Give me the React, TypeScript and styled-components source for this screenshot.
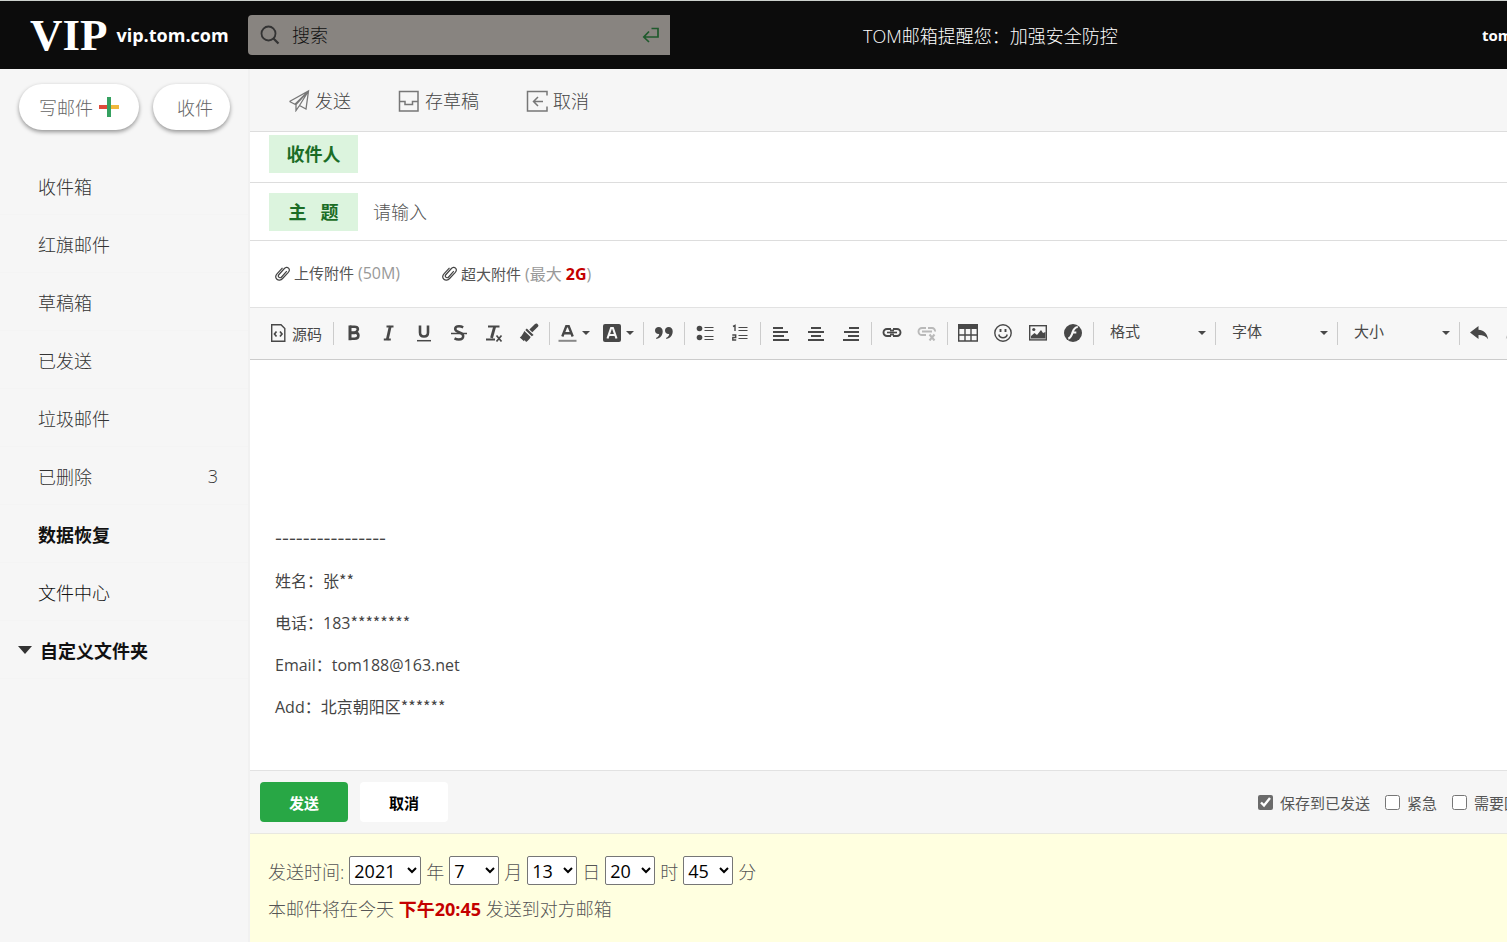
import React from "react";
import styled, { createGlobalStyle, css } from "styled-components";

const sans = `"Open Sans", "Noto Sans CJK SC", sans-serif`;

const GlobalStyle = createGlobalStyle`
  *, *::before, *::after { box-sizing: border-box; }
  body { margin: 0; font-family: ${sans}; font-size: 18px; color: #555; background: #f6f6f6; overflow-x: hidden; }
  button, input, select, textarea { font: inherit; color: inherit; }
  button { cursor: pointer; }
`;

const Page = styled.div`
  display: flex;
  flex-direction: column;
  min-height: 100vh;
`;

const Header = styled.header`
  display: flex;
  align-items: center;
  height: 69px;
  border-top: 1px solid #ccd1cd;
  background: #0c0c0c;
  color: #fff;
  white-space: nowrap;
  overflow: hidden;
`;

const Brand = styled.a`
  display: flex;
  align-items: center;
  gap: 9px;
  flex: 0 0 248px;
  padding-left: 30px;
  color: #fff;
  text-decoration: none;
`;

const BrandMark = styled.span`
  font: bold 45px/60px "Liberation Serif", serif;
`;

const BrandHost = styled.span`
  font-size: 18px;
  font-weight: 700;
`;

const Search = styled.form`
  display: flex;
  align-items: center;
  gap: 12px;
  flex: 0 0 422px;
  height: 40px;
  padding: 0 10px 0 12px;
  border-radius: 4px 0 0 4px;
  background: #888480;
  color: #333;
`;

const SearchInput = styled.input`
  flex: 1;
  min-width: 0;
  padding: 0;
  border: 0;
  outline: 0;
  background: none;
  font-weight: 300;
  &::placeholder { color: #111; opacity: 1; }
`;

const IconButton = styled.button`
  display: flex;
  padding: 0;
  border: 0;
  background: none;
`;

const Notice = styled.span`
  flex: 1;
  padding-left: 193px;
  font-weight: 300;
`;

const Account = styled.span`
  flex: 0 0 25px;
  overflow: hidden;
  font-size: 15px;
  font-weight: 700;
`;

const Body = styled.div`
  display: flex;
  flex: 1;
`;

const Sidebar = styled.aside`
  flex: 0 0 248px;
  padding-top: 15px;
`;

const PillRow = styled.div`
  display: flex;
  gap: 14px;
  padding: 0 18px 0 19px;
  margin-bottom: 27px;
`;

const Pill = styled.button<{ $wide?: boolean }>`
  display: flex;
  align-items: center;
  gap: 6px;
  width: ${(p) => (p.$wide ? 120 : 77)}px;
  height: 46px;
  padding: 0 0 0 ${(p) => (p.$wide ? 20 : 24)}px;
  border: 0;
  border-radius: 23px;
  background: #fff;
  box-shadow: 0 2px 4px rgba(0, 0, 0, 0.4);
  color: #666;
  font-weight: 300;
  white-space: nowrap;
`;

const FolderList = styled.nav`
  display: flex;
  flex-direction: column;
`;

const Folder = styled.a<{ $tone?: "bold" | "dark" | "group" }>`
  display: flex;
  align-items: center;
  gap: 8px;
  height: 58px;
  padding: 0 30px 0 ${(p) => (p.$tone === "group" ? 18 : 38)}px;
  border-bottom: 1px solid #f4f4f4;
  color: ${(p) => (p.$tone ? "#111" : "#333")};
  font-weight: ${(p) => (p.$tone === "bold" || p.$tone === "group" ? 700 : 300)};
  text-decoration: none;
`;

const Count = styled.span`
  margin-left: auto;
`;

const Main = styled.main`
  display: flex;
  flex: 1;
  flex-direction: column;
  min-width: 0;
  border-left: 2px solid #f1f1f1;
  background: #fff;
`;

const ActionBar = styled.div`
  display: flex;
  align-items: center;
  gap: 47px;
  height: 63px;
  padding: 0 38px;
  border-bottom: 1px solid #ddd;
  background: #f6f6f6;
`;

const Action = styled.button`
  display: flex;
  align-items: center;
  gap: 5px;
  padding: 0;
  border: 0;
  background: none;
  color: #444;
  font-weight: 300;
`;

const Field = styled.div<{ $tall?: boolean }>`
  display: flex;
  align-items: ${(p) => (p.$tall ? "center" : "flex-start")};
  gap: 15px;
  height: ${(p) => (p.$tall ? 58 : 51)}px;
  padding: ${(p) => (p.$tall ? 0 : 3)}px 19px 0;
  border-bottom: 1px solid #ddd;
`;

const FieldLabel = styled.label`
  flex: 0 0 89px;
  height: 38px;
  background: #dcf4de;
  color: #1b6d26;
  font-weight: 700;
  line-height: 38px;
  text-align: center;
  white-space: pre;
`;

const FieldInput = styled.input`
  flex: 1;
  min-width: 0;
  height: 38px;
  padding: 0;
  border: 0;
  outline: 0;
  font-weight: 300;
  &::placeholder { color: #555; opacity: 1; }
`;

const Attachments = styled.div`
  display: flex;
  align-items: center;
  gap: 42px;
  height: 67px;
  padding: 0 25px 2px;
  border-bottom: 1px solid #e2e2e2;
`;

const Attach = styled.button`
  display: flex;
  align-items: center;
  gap: 4px;
  padding: 0;
  border: 0;
  background: none;
  font-size: 15px;
`;

const Hint = styled.span`
  color: #999;
  font-size: 16px;
`;

const Red = styled.b`
  color: #c40000;
  font-weight: 700;
`;

const Toolbar = styled.div`
  display: flex;
  align-items: center;
  height: 52px;
  padding: 0 0 1px 20px;
  border-bottom: 1px solid #ccc;
  background: #f7f7f7;
  color: #484848;
  overflow: hidden;
`;

const Tool = styled.button<{ $kind?: "source" | "menu"; $off?: boolean }>`
  display: flex;
  flex: none;
  align-items: center;
  justify-content: center;
  gap: 5px;
  width: 35px;
  height: 34px;
  padding: 0;
  border: 0;
  background: none;
  font-size: 15px;
  white-space: nowrap;
  ${(p) => p.$kind === "source" && css`
    justify-content: flex-start;
    width: 60px;
  `}
  ${(p) => p.$kind === "menu" && css`
    width: 44px;
  `}
  ${(p) => p.$off && css`
    opacity: 0.35;
  `}
`;

const Divider = styled.span`
  flex: none;
  width: 1px;
  height: 23px;
  margin: 0 2px 0 3px;
  background: #ccc;
`;

const Combo = styled.label`
  position: relative;
  flex: none;
  width: 116px;
  svg { position: absolute; right: 6px; top: 14px; pointer-events: none; }
`;

const ComboSelect = styled.select`
  width: 100%;
  height: 32px;
  padding: 0 0 4px 14px;
  border: 0;
  appearance: none;
  background: none;
  font-size: 15px;
`;

const Editor = styled.article`
  flex: 1;
  min-height: 410px;
  padding: 166px 25px 20px;
  color: #444;
  font-size: 16px;
  line-height: 26px;
  outline: 0;
`;

const Line = styled.p`
  height: 26px;
  margin: 0 0 16px;
`;

const Mask = styled.span`
  font-family: "Noto Sans CJK SC", sans-serif;
  line-height: 16px;
`;

const Rule = styled(Mask)`
  font-size: 20px;
`;

const SendBar = styled.div`
  display: flex;
  align-items: center;
  gap: 12px;
  height: 64px;
  padding-left: 10px;
  border-top: 1px solid #e2e2e2;
  border-bottom: 1px solid #e8e8e0;
  background: #f6f6f6;
`;

const SendButton = styled.button<{ $primary?: boolean }>`
  width: 88px;
  height: 40px;
  padding: 0;
  border: 0;
  border-radius: 4px;
  background: ${(p) => (p.$primary ? "#28a745" : "#fff")};
  color: ${(p) => (p.$primary ? "#fff" : "#000")};
  font-size: 15px;
  font-weight: 700;
`;

const Options = styled.div`
  display: flex;
  gap: 15px;
  width: 249px;
  margin-left: auto;
  overflow: hidden;
`;

const Option = styled.label`
  display: flex;
  flex: none;
  align-items: center;
  gap: 7px;
  font-size: 15px;
`;

const Check = styled.input`
  width: 15px;
  height: 15px;
  margin: 0;
  accent-color: #6b6b6b;
`;

const Schedule = styled.section`
  height: 108px;
  padding: 22px 18px 0;
  background: #ffffe0;
  color: #555;
  font-weight: 300;
`;

const ScheduleRow = styled.div`
  display: flex;
  align-items: center;
  gap: 5px;
  height: 29px;
  margin-bottom: 8px;
  white-space: nowrap;
`;

const TimeLabel = styled.span`
  flex: 0 0 74px;
`;

const TimeSelect = styled.select<{ $wide?: boolean }>`
  width: ${(p) => (p.$wide ? 72 : 50)}px;
  height: 29px;
  padding: 0;
  border: 1px solid #767676;
  border-radius: 2px;
  background-color: #fff;
  color: #000;
  font-weight: 400;
`;

const Svg = ({ w = 20, h = w, children }: { w?: number; h?: number; children: React.ReactNode }) => (
  <svg width={w} height={h} viewBox={`0 0 ${w} ${h}`} fill="none" stroke="currentColor" strokeWidth="1.5" aria-hidden="true">
    {children}
  </svg>
);

const Caret = () => (
  <Svg w={8} h={4}><path d="M0 0h8L4 4z" fill="currentColor" stroke="none" /></Svg>
);

const Clip = () => (
  <Svg w={15} h={16}>
    <path d="M11.8 6.2 6.6 12c-.8.9-2.1 1-2.8.2-.7-.7-.6-1.8.2-2.7L9.4 3.5c1.2-1.3 3-1.5 4.1-.4 1.1 1.1 1 2.8-.2 4.2L7.6 13.5c-1.700 1.900-4.200 2.100-5.700.7s-1.400-3.700.3-5.600L7.500 2.800" strokeWidth="1.200" stroke="#444" />
  </Svg>
);

const icons = {
  source: (
    <Svg w={17} h={18}>
      <path d="M1.700.7h9.300l3.800 3.800v12.800H1.700z" strokeWidth="1.400" />
      <path d="M6.500 7.500 4.500 10l2 2.500M10 7.500l2 2.500-2 2.500" strokeWidth="1.700" />
    </Svg>
  ),
  bold: (
    <Svg w={18}><path d="M4.800 2.700h4.700c2.200 0 3.400.9 3.400 2.600 0 1.400-.9 2.200-2.500 3.300 1.900.2 3 1.300 3 3 0 2-1.400 3.200-3.900 3.200H4.800" strokeWidth="2.600" /><path d="M5 1.500v14.800M5 8.700h5" strokeWidth="3" /></Svg>
  ),
  italic: <Svg w={18}><path d="M6.500 2.500h7M3.800 15.500h7" strokeWidth="2" /><path d="M10.300 2 7.200 16" strokeWidth="2.800" /></Svg>,
  underline: <Svg w={18}><path d="M5 1.500v7c0 2.500 1.300 4 4 4s4-1.500 4-4v-7" strokeWidth="2.600" /><path d="M2 16.700h14" strokeWidth="1.500" /></Svg>,
  strike: (
    <Svg w={18}><path d="M13.200 3.300C11.800 2.600 10.500 2.300 9 2.300 6.500 2.300 5.200 3.400 5.200 5c0 4 8 2.600 8 7 0 2.200-1.700 3.500-4.400 3.500-1.600 0-3-.4-4.300-1.100" strokeWidth="2.500" /><path d="M1 9.500h16" strokeWidth="1.500" /></Svg>
  ),
  clear: (
    <Svg w={20} h={20}><path d="M4 3.500h11.500M2 16.500h9" strokeWidth="1.800" /><path d="M10.700 3.500 7.500 15" strokeWidth="2.800" /><path d="m12.500 12.500 5 6m0-6-5 6" strokeWidth="1.700" /></Svg>
  ),
  brush: (
    <Svg w={20}>
      <path d="m18.200.8.900 1c.5.600.4 1.200-.2 1.900l-5.600 5.500-2.900-2.700L16 1.100c.7-.7 1.600-.9 2.200-.3z" fill="currentColor" stroke="none" />
      <path d="m7.800 5.500 6.800 6.400-1.800 1.400-6.500-6.200zM5.300 8l6.400 6.100c-1 2.200-2.600 3.800-4.600 4.900l-1.500-2-.6 1.200L.8 14.500c2.300-1.600 3.200-3.900 4.500-6.500z" fill="currentColor" stroke="none" />
    </Svg>
  ),
  color: (
    <Svg w={19} h={20}><path d="m4.300 13.500 4-10.300h2.400l4 10.300M6 10.200h7" strokeWidth="2.400" /><path d="M.5 17.800h18" stroke="#888" strokeWidth="2" /></Svg>
  ),
  fill: (
    <Svg w={18}>
      <rect x="0" y="0" width="18" height="18" rx="2" fill="currentColor" stroke="none" />
      <path d="m4.500 14.500 3.600-10.500h1.800l3.600 10.500M6 11h6" stroke="#f7f7f7" strokeWidth="2.100" />
    </Svg>
  ),
  quote: (
    <Svg w={20} h={14}>
      <path d="M1 4.500C1 2.500 2.500 1 4.700 1c2.400 0 4 1.800 4 4.300 0 4-2.200 6.800-6.200 7.800l-.5-1.200c2-.9 3.100-2.200 3.200-4C2.700 8.200 1 6.700 1 4.500zM11 4.500C11 2.500 12.500 1 14.700 1c2.400 0 4 1.800 4 4.300 0 4-2.200 6.800-6.200 7.800l-.5-1.200c2-.9 3.100-2.200 3.200-4-2.500.3-4.200-1.200-4.200-3.400z" fill="currentColor" stroke="none" />
    </Svg>
  ),
  bullets: (
    <Svg w={18} h={16}>
      <circle cx="3.500" cy="3.500" r="2.800" fill="currentColor" stroke="none" />
      <circle cx="3.500" cy="12.500" r="2.800" fill="currentColor" stroke="none" />
      <path d="M8.500 2.500h9M8.500 5.500h9M8.500 11.500h9M8.500 14.500h9" strokeWidth="1.200" />
    </Svg>
  ),
  numbers: (
    <Svg w={18} h={18}>
      <path d="M2 2.500 4 1.500V7M1.300 11h3.400v2.500H1.800V16h3.400" strokeWidth="1.400" />
      <path d="M7.500 3.500h9M7.500 6.500h9M7.500 11.500h9M7.500 14.500h9" strokeWidth="1.200" />
    </Svg>
  ),
  left: <Svg w={16}><path d="M0 3h10M0 7h15M0 11h11M0 15h16" strokeWidth="2" /></Svg>,
  center: <Svg w={16}><path d="M3 3h10M0 7h16M3 11h10M0 15h16" strokeWidth="2" /></Svg>,
  right: <Svg w={16}><path d="M6 3h10M1 7h15M5 11h11M0 15h16" strokeWidth="2" /></Svg>,
  link: (
    <Svg w={20} h={12}><path d="M9 2H5a3.500 3.500 0 0 0 0 7H9M11 2h4a3.500 3.500 0 0 1 0 7H11M9 2.500v2M11 2.500v2M9 6.500v2M11 6.500v2" strokeWidth="1.900" /><path d="M5 5.500h10" strokeWidth="1.600" /></Svg>
  ),
  unlink: (
    <Svg w={20} h={16}><path d="M9 3H5a3.500 3.500 0 0 0 0 7H9M11 3h4a3 3 0 0 1 3 3.500M5 6.500H15" strokeWidth="1.900" /><path d="m12.500 9.500 5 6m0-6-5 6" strokeWidth="2" /></Svg>
  ),
  table: (
    <Svg w={20} h={18}><path d="M0 0h20v5H0z" fill="currentColor" stroke="none" /><path d="M.7 1v16h18.600V1M1 11h18M7 5v12M13 5v12" strokeWidth="1.400" /></Svg>
  ),
  smile: (
    <Svg w={18}><circle cx="9" cy="9" r="8.200" strokeWidth="1.400" /><path d="M4.800 10.500c1 4.300 7.400 4.300 8.400 0" strokeWidth="1.500" /><path d="M6.500 5v3M11.500 5v3" strokeWidth="1.900" /></Svg>
  ),
  image: (
    <Svg w={18} h={16}><rect x=".7" y=".7" width="16.600" height="14.200" strokeWidth="1.400" /><path d="m2 13.500v-2.500l3.500-3 2.500 2 4-5 2 3 2.500-1v6.500z" fill="currentColor" stroke="none" /><circle cx="4.800" cy="4.500" r="1.600" fill="currentColor" stroke="none" /></Svg>
  ),
  flash: (
    <Svg w={18}><circle cx="9" cy="9" r="9" fill="currentColor" stroke="none" /><path d="M13.800 3c-3.200.2-4.300 2.500-5.200 5.300C7.700 11.500 7 13.800 4.300 14.600M8 8.500h4.300" stroke="#f7f7f7" strokeWidth="2.200" /></Svg>
  ),
  undo: (
    <Svg w={19} h={14}><path d="M0 6.500 8.500 0v3.800c5 .2 8.500 3 9.700 9.400-2.300-3-5-4.200-9.700-4.200v4z" fill="currentColor" stroke="none" /></Svg>
  ),
  redo: (
    <Svg w={19} h={14}><path d="M19 6.500 10.500 0v3.800c-5 .2-8.500 3-9.700 9.400 2.300-3 5-4.200 9.700-4.200v4z" fill="currentColor" stroke="none" /></Svg>
  ),
};

type IconName = keyof typeof icons;

const toolGroups: { name: IconName; label: string; menu?: boolean; off?: boolean }[][] = [
  [
    { name: "bold", label: "加粗" },
    { name: "italic", label: "倾斜" },
    { name: "underline", label: "下划线" },
    { name: "strike", label: "删除线" },
    { name: "clear", label: "清除格式" },
    { name: "brush", label: "复制格式" },
  ],
  [
    { name: "color", label: "文本颜色", menu: true },
    { name: "fill", label: "背景颜色", menu: true },
  ],
  [{ name: "quote", label: "块引用" }],
  [
    { name: "bullets", label: "项目列表" },
    { name: "numbers", label: "编号列表" },
  ],
  [
    { name: "left", label: "左对齐" },
    { name: "center", label: "居中" },
    { name: "right", label: "右对齐" },
  ],
  [
    { name: "link", label: "插入链接" },
    { name: "unlink", label: "取消链接", off: true },
  ],
  [
    { name: "table", label: "表格" },
    { name: "smile", label: "表情" },
    { name: "image", label: "图像" },
    { name: "flash", label: "Flash" },
  ],
];

const folders: { name: string; count?: number; tone?: "bold" | "dark" | "group" }[] = [
  { name: "收件箱" },
  { name: "红旗邮件" },
  { name: "草稿箱" },
  { name: "已发送" },
  { name: "垃圾邮件" },
  { name: "已删除", count: 3 },
  { name: "数据恢复", tone: "bold" },
  { name: "文件中心", tone: "dark" },
  { name: "自定义文件夹", tone: "group" },
];

const times = [
  { value: "2021", unit: "年" },
  { value: "7", unit: "月" },
  { value: "13", unit: "日" },
  { value: "20", unit: "时" },
  { value: "45", unit: "分" },
];

export default function App() {
  return (
    <Page>
      <GlobalStyle />
      <Header>
        <Brand href="#">
          <BrandMark>VIP</BrandMark>
          <BrandHost>vip.tom.com</BrandHost>
        </Brand>
        <Search onSubmit={(e) => e.preventDefault()}>
          <Svg w={20}><circle cx="8.500" cy="8.500" r="7" strokeWidth="1.800" /><path d="m13.500 13.500 5 5" strokeWidth="2.200" /></Svg>
          <SearchInput aria-label="搜索" placeholder="搜索" />
          <IconButton aria-label="搜索">
            <Svg w={18} h={16}><path d="M9.500 1.500H16v8.500H2M7 4.500 1.800 10 7 15" stroke="#1f5a2c" strokeWidth="1.700" /></Svg>
          </IconButton>
        </Search>
        <Notice>TOM邮箱提醒您：加强安全防控</Notice>
        <Account>tom</Account>
      </Header>
      <Body>
        <Sidebar>
          <PillRow>
            <Pill $wide>
              写邮件
              <Svg w={20}>
                <path d="M0 10h10" stroke="#e04a3a" strokeWidth="4" />
                <path d="M10 10h10" stroke="#f0b83c" strokeWidth="4" />
                <path d="M10 0v20" stroke="#35a160" strokeWidth="4" />
              </Svg>
            </Pill>
            <Pill>收件</Pill>
          </PillRow>
          <FolderList>
            {folders.map((f) => (
              <Folder key={f.name} href="#" $tone={f.tone}>
                {f.tone === "group" && <Svg w={14} h={8}><path d="M0 0h14L7 8z" fill="#333" stroke="none" /></Svg>}
                {f.name}
                {f.count && <Count>{f.count}</Count>}
              </Folder>
            ))}
          </FolderList>
        </Sidebar>
        <Main>
          <ActionBar>
            <Action>
              <Svg w={22} h={24}><path d="M1.500 13.500 20.500 3 18 21l-6.500-3.500M1.500 13.500l5.500 2.800L20.500 3 8 16.500v6l3.500-5L20.500 3" strokeWidth="1.300" stroke="#777" /></Svg>
              发送
            </Action>
            <Action>
              <Svg w={22} h={24}><path d="M1.500 3.500h18.500v19.500H1.500zM1.500 13.500H7v3h7.500v-3H20" stroke="#777" /></Svg>
              存草稿
            </Action>
            <Action>
              <Svg w={22} h={24}><path d="M21 7.500v-4H1.500V23H21v-4.500M17 13.500H7.500M12 9l-4.500 4.500L12 18" stroke="#777" /></Svg>
              取消
            </Action>
          </ActionBar>
          <Field>
            <FieldLabel htmlFor="to">收件人</FieldLabel>
            <FieldInput id="to" />
          </Field>
          <Field $tall>
            <FieldLabel htmlFor="subject">{"主   题"}</FieldLabel>
            <FieldInput id="subject" placeholder="请输入" />
          </Field>
          <Attachments>
            <Attach><Clip /><span>上传附件 <Hint>(50M)</Hint></span></Attach>
            <Attach><Clip /><span>超大附件 <Hint>(最大 <Red>2G</Red>)</Hint></span></Attach>
          </Attachments>
          <Toolbar>
            <Tool $kind="source">{icons.source}源码</Tool>
            <Divider />
            {toolGroups.map((group, i) => (
              <React.Fragment key={i}>
                {group.map((t) => (
                  <Tool key={t.name} aria-label={t.label} $kind={t.menu ? "menu" : undefined} $off={t.off}>
                    {icons[t.name]}
                    {t.menu && <Caret />}
                  </Tool>
                ))}
                <Divider />
              </React.Fragment>
            ))}
            {["格式", "字体", "大小"].map((name) => (
              <React.Fragment key={name}>
                <Combo>
                  <ComboSelect aria-label={name}><option>{name}</option></ComboSelect>
                  <Caret />
                </Combo>
                <Divider />
              </React.Fragment>
            ))}
            <Tool aria-label="撤消">{icons.undo}</Tool>
            <Tool aria-label="重做" $off>{icons.redo}</Tool>
          </Toolbar>
          <Editor contentEditable suppressContentEditableWarning>
            <Line><Rule>----------------</Rule></Line>
            <Line>姓名：张<Mask>**</Mask></Line>
            <Line>电话：183<Mask>********</Mask></Line>
            <Line>Email：tom188@163.net</Line>
            <Line>Add：北京朝阳区<Mask>******</Mask></Line>
          </Editor>
          <SendBar>
            <SendButton $primary>发送</SendButton>
            <SendButton>取消</SendButton>
            <Options>
              <Option><Check type="checkbox" defaultChecked />保存到已发送</Option>
              <Option><Check type="checkbox" />紧急</Option>
              <Option><Check type="checkbox" />需要回执</Option>
            </Options>
          </SendBar>
          <Schedule>
            <ScheduleRow>
              <TimeLabel>发送时间:</TimeLabel>
              {times.map((t) => (
                <React.Fragment key={t.unit}>
                  <TimeSelect aria-label={t.unit} $wide={t.unit === "年"}><option>{t.value}</option></TimeSelect>
                  <span>{t.unit}</span>
                </React.Fragment>
              ))}
            </ScheduleRow>
            <ScheduleRow>
              <span>本邮件将在今天 <Red>下午20:45</Red> 发送到对方邮箱</span>
            </ScheduleRow>
          </Schedule>
        </Main>
      </Body>
    </Page>
  );
}
